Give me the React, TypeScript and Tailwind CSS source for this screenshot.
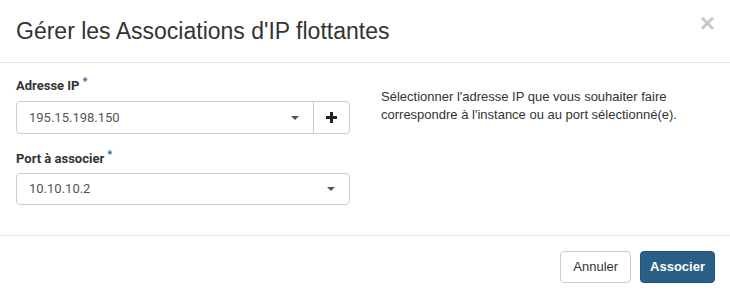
const ChevronDown = () => (
    <svg width="10" height="6" viewBox="0 0 10 6" className="text-[#555]">
        <path d="M1 1 L5 5 L9 1 Z" fill="currentColor" />
    </svg>
);

function Label({ text }: { text: string }) {
    return (
        <label className="flex items-start font-['Roboto',sans-serif] text-[13px] font-bold text-[#333] leading-[18px]">
            {text}
            <span className="ml-[3px] text-[11px] leading-[10px] text-[#2a6496]">*</span>
        </label>
    );
}

export default function App() {
    return (
        <div className="w-[730px] h-[297px] bg-white font-['Liberation_Sans',Arial,sans-serif] text-[#333]">
            <div className="h-[63px] border-b border-[#e5e5e5] flex items-start justify-between pl-[16px] pr-[15px] pt-[16px]">
                <h4 className="text-[23px] leading-[31px] font-normal text-[#333]">
                    Gérer les Associations d'IP flottantes
                </h4>
                <span className="text-[26px] font-bold leading-[20px] text-[#c8c8c8] -mt-[3px]">×</span>
            </div>

            <div className="h-[173px] border-b border-[#e5e5e5] flex pt-[14px]">
                <div className="w-[334px] ml-[16px] flex flex-col">
                    <Label text="Adresse IP" />
                    <div className="mt-[6px] h-[33px] border border-[#ccc] rounded-[4px] flex">
                        <div className="flex-1 flex items-center justify-between pl-[12px] pr-[13px] font-['Roboto',sans-serif] text-[13px] text-[#555]">
                            195.15.198.150
                            <ChevronDown />
                        </div>
                        <div className="w-[36px] border-l border-[#ccc] flex items-center justify-center">
                            <svg width="11" height="11" viewBox="0 0 11 11">
                                <path d="M4 0h3v4h4v3H7v4H4V7H0V4h4z" fill="#222" />
                            </svg>
                        </div>
                    </div>
                    <div className="mt-[16px]">
                        <Label text="Port à associer" />
                    </div>
                    <div className="mt-[5px] h-[32px] border border-[#ccc] rounded-[4px] flex items-center justify-between pl-[12px] pr-[13px] font-['Roboto',sans-serif] text-[13px] text-[#555]">
                        10.10.10.2
                        <ChevronDown />
                    </div>
                </div>
                <div className="ml-[31px] pt-[11px] w-[320px] text-[13px] leading-[18px] text-[#333]">
                    Sélectionner l'adresse IP que vous souhaiter faire correspondre à l'instance ou au port sélectionné(e).
                </div>
            </div>

            <div className="flex justify-end gap-[9px] pt-[15px] pr-[15px]">
                <button className="h-[32px] px-[12px] border border-[#ccc] rounded-[4px] bg-white text-[13px] text-[#333]">
                    Annuler
                </button>
                <button className="h-[32px] px-[9px] border border-[#22537a] rounded-[4px] bg-[#2a5f88] text-[13px] font-bold text-white">
                    Associer
                </button>
            </div>
        </div>
    );
}
